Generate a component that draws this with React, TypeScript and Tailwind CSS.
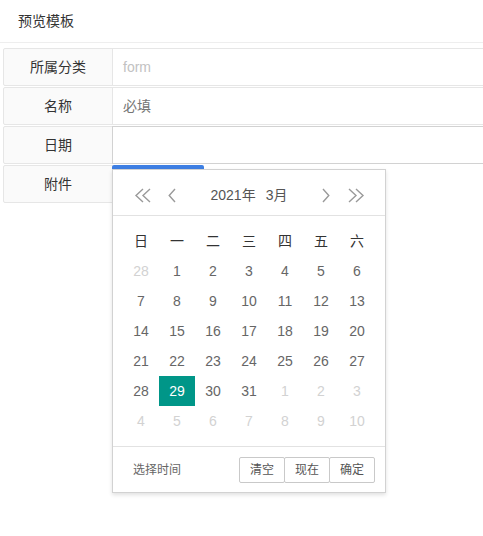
import React from "react";

const font = { fontFamily: '"Liberation Sans", "Noto Sans CJK SC", sans-serif' };

function Single({ dir }: { dir: "l" | "r" }) {
  return (
    <svg width="8" height="15" viewBox="0 0 8 15" className="shrink-0">
      <path
        d={dir === "l" ? "M7 1 L1.2 7.5 L7 14" : "M1 1 L6.8 7.5 L1 14"}
        fill="none"
        stroke="#9a9a9a"
        strokeWidth="1.4"
      />
    </svg>
  );
}

function Double({ dir }: { dir: "l" | "r" }) {
  return (
    <svg width="17" height="15" viewBox="0 0 17 15" className="shrink-0">
      <path
        d={
          dir === "l"
            ? "M9 1 L2 7.5 L9 14 M16 1 L9 7.5 L16 14"
            : "M1 1 L8 7.5 L1 14 M8 1 L15 7.5 L8 14"
        }
        fill="none"
        stroke="#9a9a9a"
        strokeWidth="1.4"
      />
    </svg>
  );
}

type Day = { d: number; o?: boolean; s?: boolean };

const weeks: Day[][] = [
  [{ d: 28, o: true }, { d: 1 }, { d: 2 }, { d: 3 }, { d: 4 }, { d: 5 }, { d: 6 }],
  [{ d: 7 }, { d: 8 }, { d: 9 }, { d: 10 }, { d: 11 }, { d: 12 }, { d: 13 }],
  [{ d: 14 }, { d: 15 }, { d: 16 }, { d: 17 }, { d: 18 }, { d: 19 }, { d: 20 }],
  [{ d: 21 }, { d: 22 }, { d: 23 }, { d: 24 }, { d: 25 }, { d: 26 }, { d: 27 }],
  [{ d: 28 }, { d: 29, s: true }, { d: 30 }, { d: 31 }, { d: 1, o: true }, { d: 2, o: true }, { d: 3, o: true }],
  [{ d: 4, o: true }, { d: 5, o: true }, { d: 6, o: true }, { d: 7, o: true }, { d: 8, o: true }, { d: 9, o: true }, { d: 10, o: true }],
];

const weekdays = ["日", "一", "二", "三", "四", "五", "六"];

function Row({ label, children, dark }: { label: string; children?: React.ReactNode; dark?: boolean }) {
  return (
    <div className="flex h-[38px] mb-px">
      <div className="w-[110px] shrink-0 h-[38px] border border-[#e6e6e6] bg-[#fafafa] rounded-l-[2px] flex items-center justify-center text-[14px] text-[#333]">
        {label}
      </div>
      <div
        className={
          "ml-[-1px] flex-1 h-[38px] border bg-white flex items-center pl-[10px] text-[14px] " +
          (dark ? "border-[#d2d2d2]" : "border-[#e6e6e6]")
        }
      >
        {children}
      </div>
    </div>
  );
}

export default function App() {
  return (
    <div className="relative w-[483px] h-[536px] overflow-hidden bg-white" style={font}>
      <div className="h-[43px] border-b border-[#eeeeee] pl-[18px] text-[14px] text-[#333] leading-[42px]">
        预览模板
      </div>
      <div className="pt-[5px] pl-[3px] w-[540px]">
        <Row label="所属分类">
          <span className="text-[#c2c2c2]">form</span>
        </Row>
        <Row label="名称">
          <span className="text-[#757575]">必填</span>
        </Row>
        <Row label="日期" dark />
        <div className="flex h-[38px]">
          <div className="w-[110px] shrink-0 h-[38px] border border-[#e6e6e6] bg-[#fafafa] rounded-l-[2px] flex items-center justify-center text-[14px] text-[#333]">
            附件
          </div>
          <div className="ml-[-1px] w-[92px] h-[38px] bg-[#3e7fe3] rounded-[2px]" />
        </div>
      </div>

      <div className="absolute left-[112px] top-[169px] w-[274px] bg-white border border-[#d2d2d2] shadow-[0_2px_4px_rgba(0,0,0,0.12)] text-[#666]">
        <div className="h-[46px] border-b border-[#e2e2e2] flex items-center pl-[21px] pr-[20px] pt-[5px]">
          <Double dir="l" />
          <div className="w-[17px]" />
          <Single dir="l" />
          <div className="flex-1 flex justify-center gap-[10px] text-[14px] text-[#555]">
            <span>2021年</span>
            <span>3月</span>
          </div>
          <Single dir="r" />
          <div className="w-[18px]" />
          <Double dir="r" />
        </div>
        <div className="pl-[10px] pr-[10px] py-[10px]">
          <div className="grid grid-cols-[repeat(7,36px)] auto-rows-[30px] text-[14px]">
            {weekdays.map((w) => (
              <div key={w} className="flex items-center justify-center text-[#333]">
                {w}
              </div>
            ))}
            {weeks.flat().map((c, i) => (
              <div
                key={i}
                className={
                  "flex items-center justify-center " +
                  (c.s ? "bg-[#009688] text-white" : c.o ? "text-[#d2d2d2]" : "text-[#666]")
                }
              >
                {c.d}
              </div>
            ))}
          </div>
        </div>
        <div className="h-[46px] border-t border-[#e2e2e2] flex items-start pt-[10px] pl-[20px] pr-[10px]">
          <span className="text-[12px] leading-[26px] text-[#666]">选择时间</span>
          <div className="ml-auto flex">
            {["清空", "现在", "确定"].map((b, i) => (
              <span
                key={b}
                className={
                  "h-[26px] leading-[24px] px-[10px] border border-[#c9c9c9] rounded-[2px] text-[12px] text-[#555] bg-white " +
                  (i > 0 ? "ml-[-1px]" : "")
                }
              >
                {b}
              </span>
            ))}
          </div>
        </div>
      </div>
    </div>
  );
}
